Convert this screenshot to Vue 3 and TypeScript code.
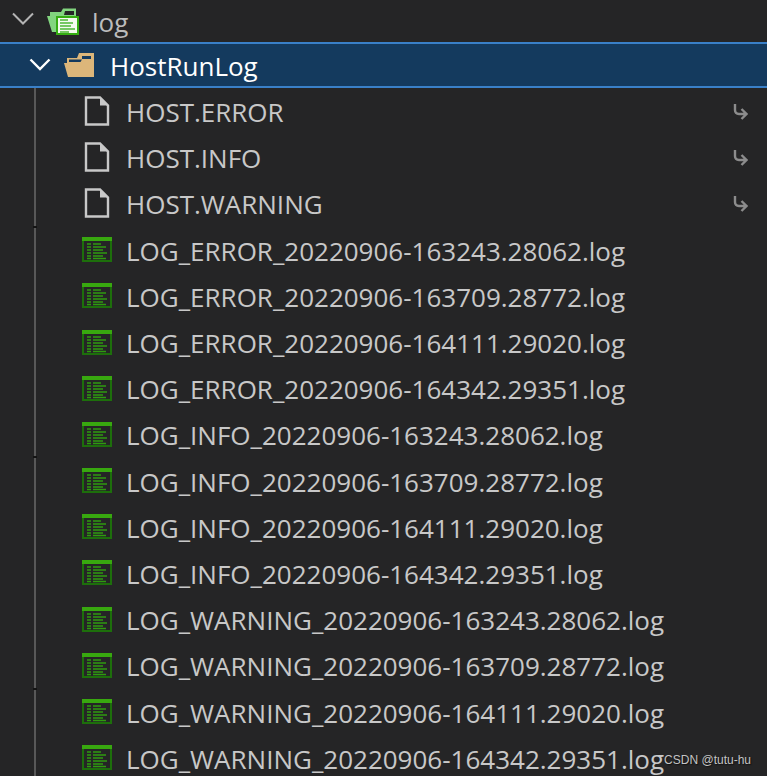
<script setup lang="ts">
interface FileRow {
  name: string;
  kind: 'plain' | 'log';
  link?: boolean;
}

const stamps = ['163243.28062', '163709.28772', '164111.29020', '164342.29351'];

const files: FileRow[] = [
  { name: 'HOST.ERROR', kind: 'plain', link: true },
  { name: 'HOST.INFO', kind: 'plain', link: true },
  { name: 'HOST.WARNING', kind: 'plain', link: true },
];

for (const level of ['ERROR', 'INFO', 'WARNING']) {
  for (const stamp of stamps) {
    files.push({ name: `LOG_${level}_20220906-${stamp}.log`, kind: 'log' });
  }
}

// little dark notches on the indent guide
const ticks = [226, 456, 688];
</script>

<template>
  <div class="tree">
    <div class="row row--root">
      <svg class="chevron" width="22" height="14" viewBox="0 0 22 14">
        <path d="M1 1.5 L11 11.5 L21 1.5" fill="none" stroke="#b4b4b4" stroke-width="2" />
      </svg>
      <svg class="folder-log" width="32" height="27" viewBox="0 0 32 27">
        <path d="M0 8 H3 V4 H14 L16 0.5 H29 V9 H32 V24 H5 Z" fill="#82d57f" />
        <path d="M18 3 H27 V7 H17 Z" fill="#252526" />
        <rect x="10" y="9" width="21" height="17" fill="#f4faf0" stroke="#35ad12" stroke-width="2" />
        <path d="M13 12 H21 M13 15 H26 M13 18 H24 M13 21 H28 M13 24 H22" stroke="#4cb834" stroke-width="1.6" />
      </svg>
      <span class="label">log</span>
    </div>

    <div class="row row--selected">
      <svg class="chevron" width="22" height="14" viewBox="0 0 22 14">
        <path d="M1.5 1.5 L11 11 L20.5 1.5" fill="none" stroke="#ffffff" stroke-width="2.4" />
      </svg>
      <svg class="folder" width="31" height="24" viewBox="0 0 31 24">
        <path d="M3 5 H13 L15 0 H30 V24 H4 L0 10 H3 Z" fill="#dcb67a" />
        <path d="M18 3 H27 V6 H18 Z M5 6.5 H18 L16.5 9 H5 Z" fill="#143a5e" />
      </svg>
      <span class="label">HostRunLog</span>
    </div>

    <div class="children">
      <div v-for="file in files" :key="file.name" class="row row--file">
        <svg v-if="file.kind === 'plain'" class="file-icon" width="30" height="30" viewBox="0 0 30 30">
          <path d="M4 1.5 H18 L26 9.5 V28.5 H4 Z" fill="none" stroke="#c8c8c8" stroke-width="2.4" />
          <path d="M18 1 V9.5 H26.5 Z" fill="#c8c8c8" />
        </svg>
        <svg v-else class="file-icon" width="30" height="25" viewBox="0 0 30 25">
          <rect x="1" y="1" width="28" height="23" fill="none" stroke="#1d6f0b" stroke-width="2" />
          <rect x="0" y="0" width="30" height="4" fill="#38a80f" />
          <path d="M5 7 H9 M11 7 H19 M5 10 H9 M11 10 H24 M5 13 H9 M11 13 H21 M5 16 H9 M11 16 H25 M5 19 H9 M11 19 H21 M5 21.5 H9 M11 21.5 H24" stroke="#2f9a10" stroke-width="1.6" />
        </svg>
        <span class="label">{{ file.name }}</span>
        <svg v-if="file.link" class="link-icon" width="15" height="17" viewBox="0 0 15 17">
          <path d="M2 1 V7 Q2 11 6 11 H13 M8.5 6 L13.5 11 L8.5 16" fill="none" stroke="#8c8c8c" stroke-width="2.4" />
        </svg>
      </div>
    </div>

    <i v-for="y in ticks" :key="y" class="tick" :style="{ top: y + 'px' }"></i>
    <span class="mark">CSDN @tutu-hu</span>
  </div>
</template>

<style scoped>
.tree {
  position: relative;
  width: 767px;
  height: 776px;
  overflow: hidden;
  background: #252526;
  color: #c8c8c8;
  font-family: "Open Sans", "Noto Sans", sans-serif;
  font-size: 26px;
}

.row {
  display: flex;
  align-items: center;
  height: 46.2px;
  box-sizing: border-box;
}

.row--root {
  height: 42px;
  padding-left: 12px;
  color: #bcbcbc;
}

.row--root .chevron {
  margin-top: -4px;
}

.row--selected {
  height: 46px;
  padding-left: 29px;
  color: #ffffff;
  background: #143a5e;
  border-top: 2px solid #3a80c8;
  border-bottom: 2px solid #3a80c8;
}

.row--file {
  padding-left: 46px;
}

.chevron {
  flex: none;
}

.folder-log,
.folder {
  flex: none;
  margin-left: 13px;
  margin-right: 13px;
}

.folder {
  margin-right: 15px;
}

.children {
  margin-left: 34px;
  border-left: 2px solid #585858;
}

.file-icon {
  flex: none;
}

.label {
  margin-top: 2px;
  margin-left: 14px;
  white-space: nowrap;
  line-height: 1;
}

.row--root .label,
.row--selected .label {
  margin-left: 0;
}

.link-icon {
  flex: none;
  margin-left: auto;
  margin-right: 19px;
}

.tick {
  position: absolute;
  left: 33px;
  width: 4px;
  height: 2px;
  background: #141414;
}

.mark {
  position: absolute;
  right: 16px;
  top: 753px;
  font-family: "Liberation Sans", sans-serif;
  font-size: 12px;
  color: #c4c4c4;
  text-shadow: 1px 1px 1px #111111;
}
</style>

<style>
html,
body {
  margin: 0;
  background: #252526;
}
</style>
